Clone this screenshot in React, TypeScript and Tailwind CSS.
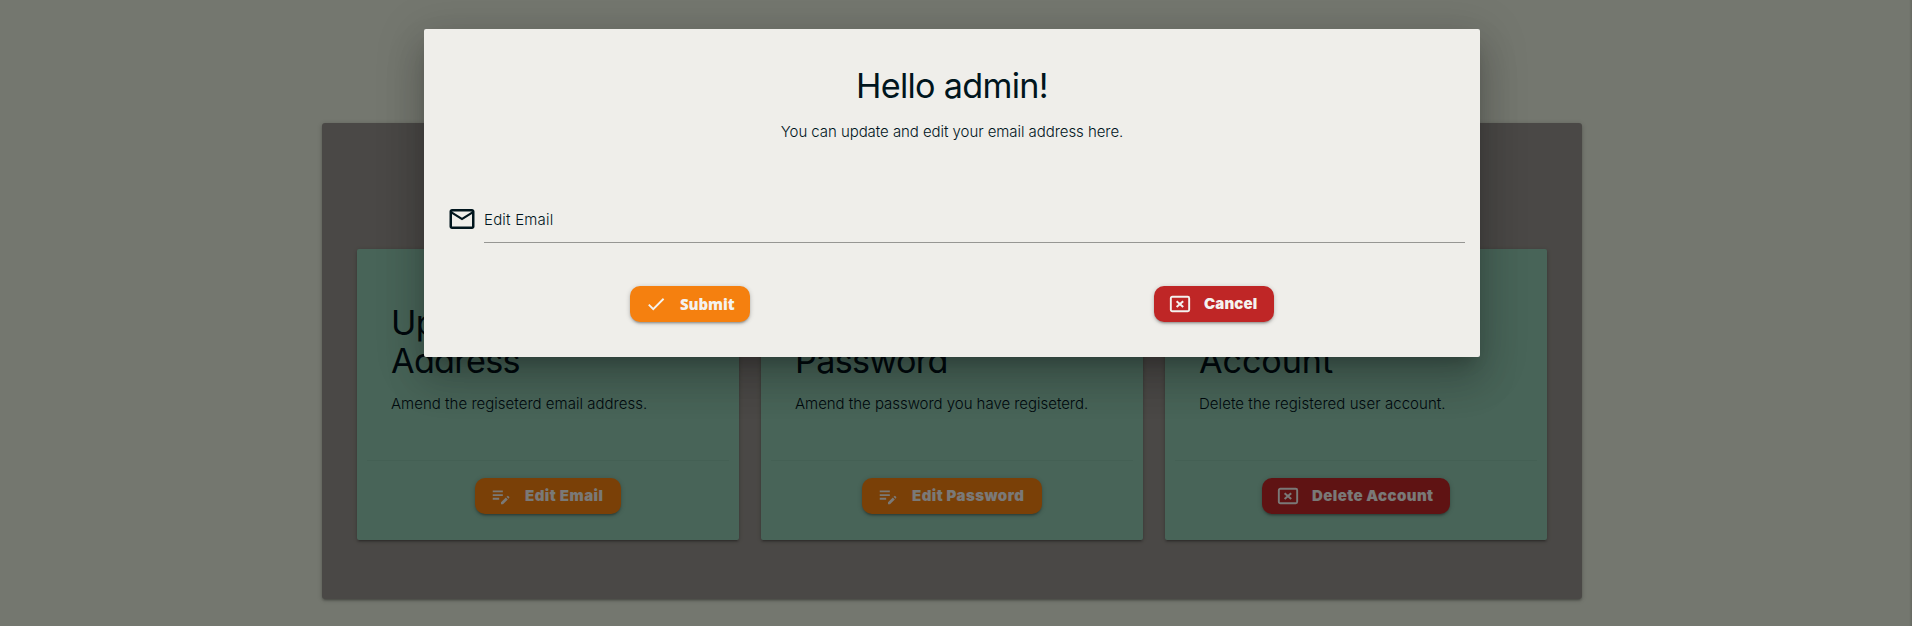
import type { ReactNode } from "react";
import { MdCheck, MdEditNote, MdMailOutline } from "react-icons/md";

const depth =
  "shadow-[0_2px_2px_0_rgba(0,0,0,0.14),0_3px_1px_-2px_rgba(0,0,0,0.12),0_1px_5px_0_rgba(0,0,0,0.2)]";

function CancelIcon() {
  return (
    <svg viewBox="0 0 24 24" width="1em" height="1em" fill="none" stroke="currentColor" strokeWidth="2.1">
      <rect x="2" y="4" width="20" height="16" rx="1.6" />
      <path d="M8.3 8.9l7.2 6.4M15.5 8.9l-7.2 6.4" strokeWidth="2.2" />
    </svg>
  );
}

type ButtonProps = { tone: "orange" | "red"; width: string; icon: ReactNode; labelClass: string; children: ReactNode };

function Button({ tone, width, icon, labelClass, children }: ButtonProps) {
  const color = tone === "orange" ? "bg-[#f5800f]" : "bg-[#bf2626]";
  return (
    <button
      type="button"
      className={`flex h-9 items-center rounded-[10px] pl-[15px] text-[15px] leading-9 whitespace-nowrap text-[#f4f2ef] ${color} ${width} ${depth}`}
    >
      <span className="mr-[13px] text-[22px]">{icon}</span>
      <span className={labelClass}>{children}</span>
    </button>
  );
}

type CardProps = { title: [string, string]; titleClass: string; text: string; textClass: string; action: ReactNode };

function Card({ title, titleClass, text, textClass, action }: CardProps) {
  return (
    <section className={`flex h-[291px] w-[382px] flex-col rounded-[2px] bg-[#90c8b0] ${depth}`}>
      <div className="h-[211px] px-[34px] pt-[55px]">
        <h4 className={`text-[34.2px] leading-[37.6px] font-normal text-[#00121a] ${titleClass}`}>
          {title[0]}
          <br />
          {title[1]}
        </h4>
        <p className={`mt-[14px] text-[15px] leading-[22px] font-light whitespace-nowrap text-[#00121a] ${textClass}`}>{text}</p>
      </div>
      <div className="mx-[10px] flex justify-center border-t border-[#88c0a9] pt-[17px]">{action}</div>
    </section>
  );
}

export default function App() {
  return (
    <div className="relative h-[626px] w-full overflow-hidden bg-[#e8eede] font-[Inter,sans-serif]">
      <main className={`mx-auto mt-[123px] h-[476px] w-[1260px] -translate-x-1 rounded-[3px] bg-[#95918c] px-[35px] pt-[126px] ${depth}`}>
        <div className="flex justify-between">
          <Card
            title={["Update Email", "Address"]}
            titleClass="tracking-[-0.7px]"
            text="Amend the regiseterd email address."
            textClass="tracking-[0.02px]"
            action={
              <Button tone="orange" width="w-[146px]" icon={<MdEditNote />} labelClass="font-black tracking-[0.5px]">
                Edit Email
              </Button>
            }
          />
          <Card
            title={["Update", "Password"]}
            titleClass="tracking-[-0.7px]"
            text="Amend the password you have regiseterd."
            textClass="tracking-[-0.03px]"
            action={
              <Button tone="orange" width="w-[180px]" icon={<MdEditNote />} labelClass="font-black tracking-[0.45px]">
                Edit Password
              </Button>
            }
          />
          <Card
            title={["Delete", "Account"]}
            titleClass="tracking-[-0.1px]"
            text="Delete the registered user account."
            textClass="tracking-[0.06px]"
            action={
              <Button tone="red" width="w-[188px]" icon={<CancelIcon />} labelClass="font-black tracking-[0.42px]">
                Delete Account
              </Button>
            }
          />
        </div>
      </main>

      <div className="absolute inset-0 bg-black/50" />
      <div className="absolute inset-y-0 right-0 w-[3px] bg-linear-to-r from-transparent to-black/12" />

      <div
        role="dialog"
        className="absolute top-[29px] left-[424px] h-[328px] w-[1056px] rounded-[2px] bg-[#efeeea] shadow-[0_24px_38px_3px_rgba(0,0,0,0.14),0_9px_46px_8px_rgba(0,0,0,0.12),0_11px_15px_-7px_rgba(0,0,0,0.2)]"
      >
        <h4 className="pt-[38px] text-center text-[34.2px] leading-[38px] font-normal tracking-[-0.7px] text-[#00151d]">Hello admin!</h4>
        <p className="mt-[16px] text-center text-[15px] leading-[22px] font-light tracking-[-0.06px] text-[#00151d]">
          You can update and edit your email address here.
        </p>
        <div className="mt-[55px] flex pr-[15px] pl-[23px]">
          <MdMailOutline className="mt-[6px] mr-[7px] size-[30px] text-[#00151d]" />
          <label className="h-[45px] flex-1 border-b border-[#969693] text-[15px] leading-[44px] font-light tracking-[0.2px] text-[#00151d]">
            Edit Email
          </label>
        </div>
        <div className="mt-[43px] grid grid-cols-2 px-[4px]">
          <div className="flex justify-center">
            <Button tone="orange" width="w-[120px]" icon={<MdCheck />} labelClass="font-['Open_Sans'] font-extrabold tracking-[-0.1px]">
              Submit
            </Button>
          </div>
          <div className="flex justify-center">
            <Button tone="red" width="w-[120px]" icon={<CancelIcon />} labelClass="font-black tracking-[0.15px]">
              Cancel
            </Button>
          </div>
        </div>
      </div>
    </div>
  );
}
